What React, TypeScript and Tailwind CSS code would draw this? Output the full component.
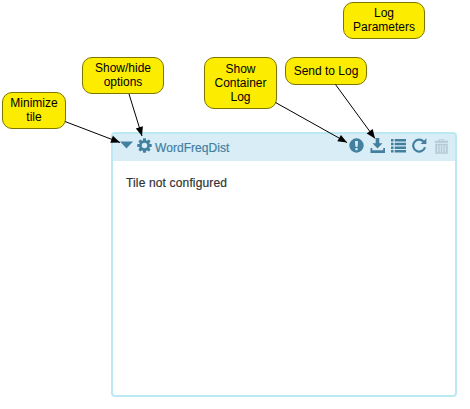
import type { ReactNode } from 'react';

function Callout({ className, lines }: { className: string; lines: string[] }) {
  return (
    <div
      className={`absolute flex flex-col items-center justify-center rounded-[10px] border border-[#7c7600] bg-[#fcec00] text-[12px] leading-[14px] text-black ${className}`}
    >
      {lines.map((line) => (
        <span key={line} className="whitespace-nowrap">{line}</span>
      ))}
    </div>
  );
}

function Icon({ children, className = '' }: { children: ReactNode; className?: string }) {
  return (
    <svg viewBox="0 0 15 15" className={`size-[15px] shrink-0 ${className}`} fill="currentColor">
      {children}
    </svg>
  );
}

const teeth = [0, 45, 90, 135, 180, 225, 270, 315];

const arrows = [
  { x1: 65, y1: 121.5, x2: 120, y2: 142.5 },
  { x1: 129, y1: 94, x2: 142, y2: 136 },
  { x1: 275.5, y1: 102.5, x2: 347, y2: 142.5 },
  { x1: 335.5, y1: 84.5, x2: 375, y2: 138.5 },
];

export default function App() {
  return (
    <div
      className="relative h-[409px] w-[470px] overflow-hidden bg-white pl-[111px] pt-[132px]"
      style={{ fontFamily: '"Liberation Sans", Arial, sans-serif' }}
    >
      <section className="h-[265px] w-[346px] rounded-[4px] border-2 border-[#bce8f1] bg-white">
        <header className="flex h-[27px] items-start bg-[#d9edf7] pl-[7px] pr-[6px] pt-1 text-[#437f9f]">
          <svg viewBox="0 0 13 8" className="mt-[3px] h-2 w-[13px]" fill="currentColor">
            <path d="M0 .5h13L6.5 7.5z" />
          </svg>
          <Icon className="ml-1">
            {teeth.map((angle) => (
              <path key={angle} d="M6.2.2h2.6l.5 3H5.7z" transform={`rotate(${angle} 7.5 7.5)`} />
            ))}
            <circle cx="7.5" cy="7.5" r="4" fill="none" stroke="currentColor" strokeWidth="2.5" />
          </Icon>
          <h1 className="ml-[3px] mt-[3px] text-[12px] leading-[14px] tracking-[0.05px] [-webkit-text-stroke:0.2px_currentColor]">WordFreqDist</h1>
          <div className="ml-auto flex items-start gap-[6px]">
            <Icon>
              <path fillRule="evenodd" d="M7.5.3a7.2 7.2 0 1 0 0 14.4 7.2 7.2 0 0 0 0-14.4zM6.1 3h2.8v2.8L8.4 9H6.6l-.5-3.2zM6.4 10.1h2.2v2.1H6.4z" />
            </Icon>
            <Icon>
              <path d="M5.7 0h3.6v5.3h3.2L7.5 10.5 2.5 5.3h3.2zM.5 10h1.8v2.2h10.9V10H15v5H.5z" />
            </Icon>
            <Icon>
              <path d="M0 1h2.5v2.5H0zM3.7 1H15v2.5H3.7zM0 4.7h2.5v2.5H0zM3.7 4.7H15v2.5H3.7zM0 8.4h2.5v2.5H0zM3.7 8.4H15v2.5H3.7zM0 12.1h2.5v2.5H0zM3.7 12.1H15v2.5H3.7z" />
            </Icon>
            <Icon>
              <path d="M11.6 3.5A6 6 0 1 0 13 9.2" fill="none" stroke="currentColor" strokeWidth="2.2" />
              <path d="M14.4.3v5.8H8.6z" />
            </Icon>
            <Icon className="ml-[1px] mt-[1px] text-[#b3c9d4]">
              <path fillRule="evenodd" d="M4.8 1.8V.3h5.4v1.5h3.6l.7 2H.5l.7-2zM5.8 1.1v.7h3.4v-.7zM1.3 4.7h12.4v10H1.3zM3.2 6v7.4h1V6zM5.7 6v7.4h1V6zM8.3 6v7.4h1V6zM10.8 6v7.4h1V6z" />
            </Icon>
          </div>
        </header>
        <p className="pl-[13px] pt-[15px] text-[12px] leading-[14px] tracking-[0.15px] text-[#333] [-webkit-text-stroke:0.2px_currentColor]">
          Tile not configured
        </p>
      </section>

      <Callout className="left-[2px] top-[92px] h-[37px] w-[64px] pb-[2px]" lines={['Minimize', 'tile']} />
      <Callout className="left-[82px] top-[57px] h-[37px] w-[82px] pb-[2px]" lines={['Show/hide', 'options']} />
      <Callout className="left-[204px] top-[57px] h-[52px] w-[73px]" lines={['Show', 'Container', 'Log']} />
      <Callout className="left-[285px] top-[57px] h-[28px] w-[82px]" lines={['Send to Log']} />
      <Callout className="left-[343px] top-[2px] h-[37px] w-[82px] pb-[2px]" lines={['Log', 'Parameters']} />

      <svg className="pointer-events-none absolute inset-0" width="470" height="409">
        {arrows.map(({ x1, y1, x2, y2 }) => (
          <g key={x1}>
            <line x1={x1} y1={y1} x2={x2} y2={y2} stroke="black" />
            <path
              d="M0 0L-9 -3.7V3.7z"
              transform={`translate(${x2} ${y2}) rotate(${(Math.atan2(y2 - y1, x2 - x1) * 180) / Math.PI})`}
            />
          </g>
        ))}
      </svg>
    </div>
  );
}
